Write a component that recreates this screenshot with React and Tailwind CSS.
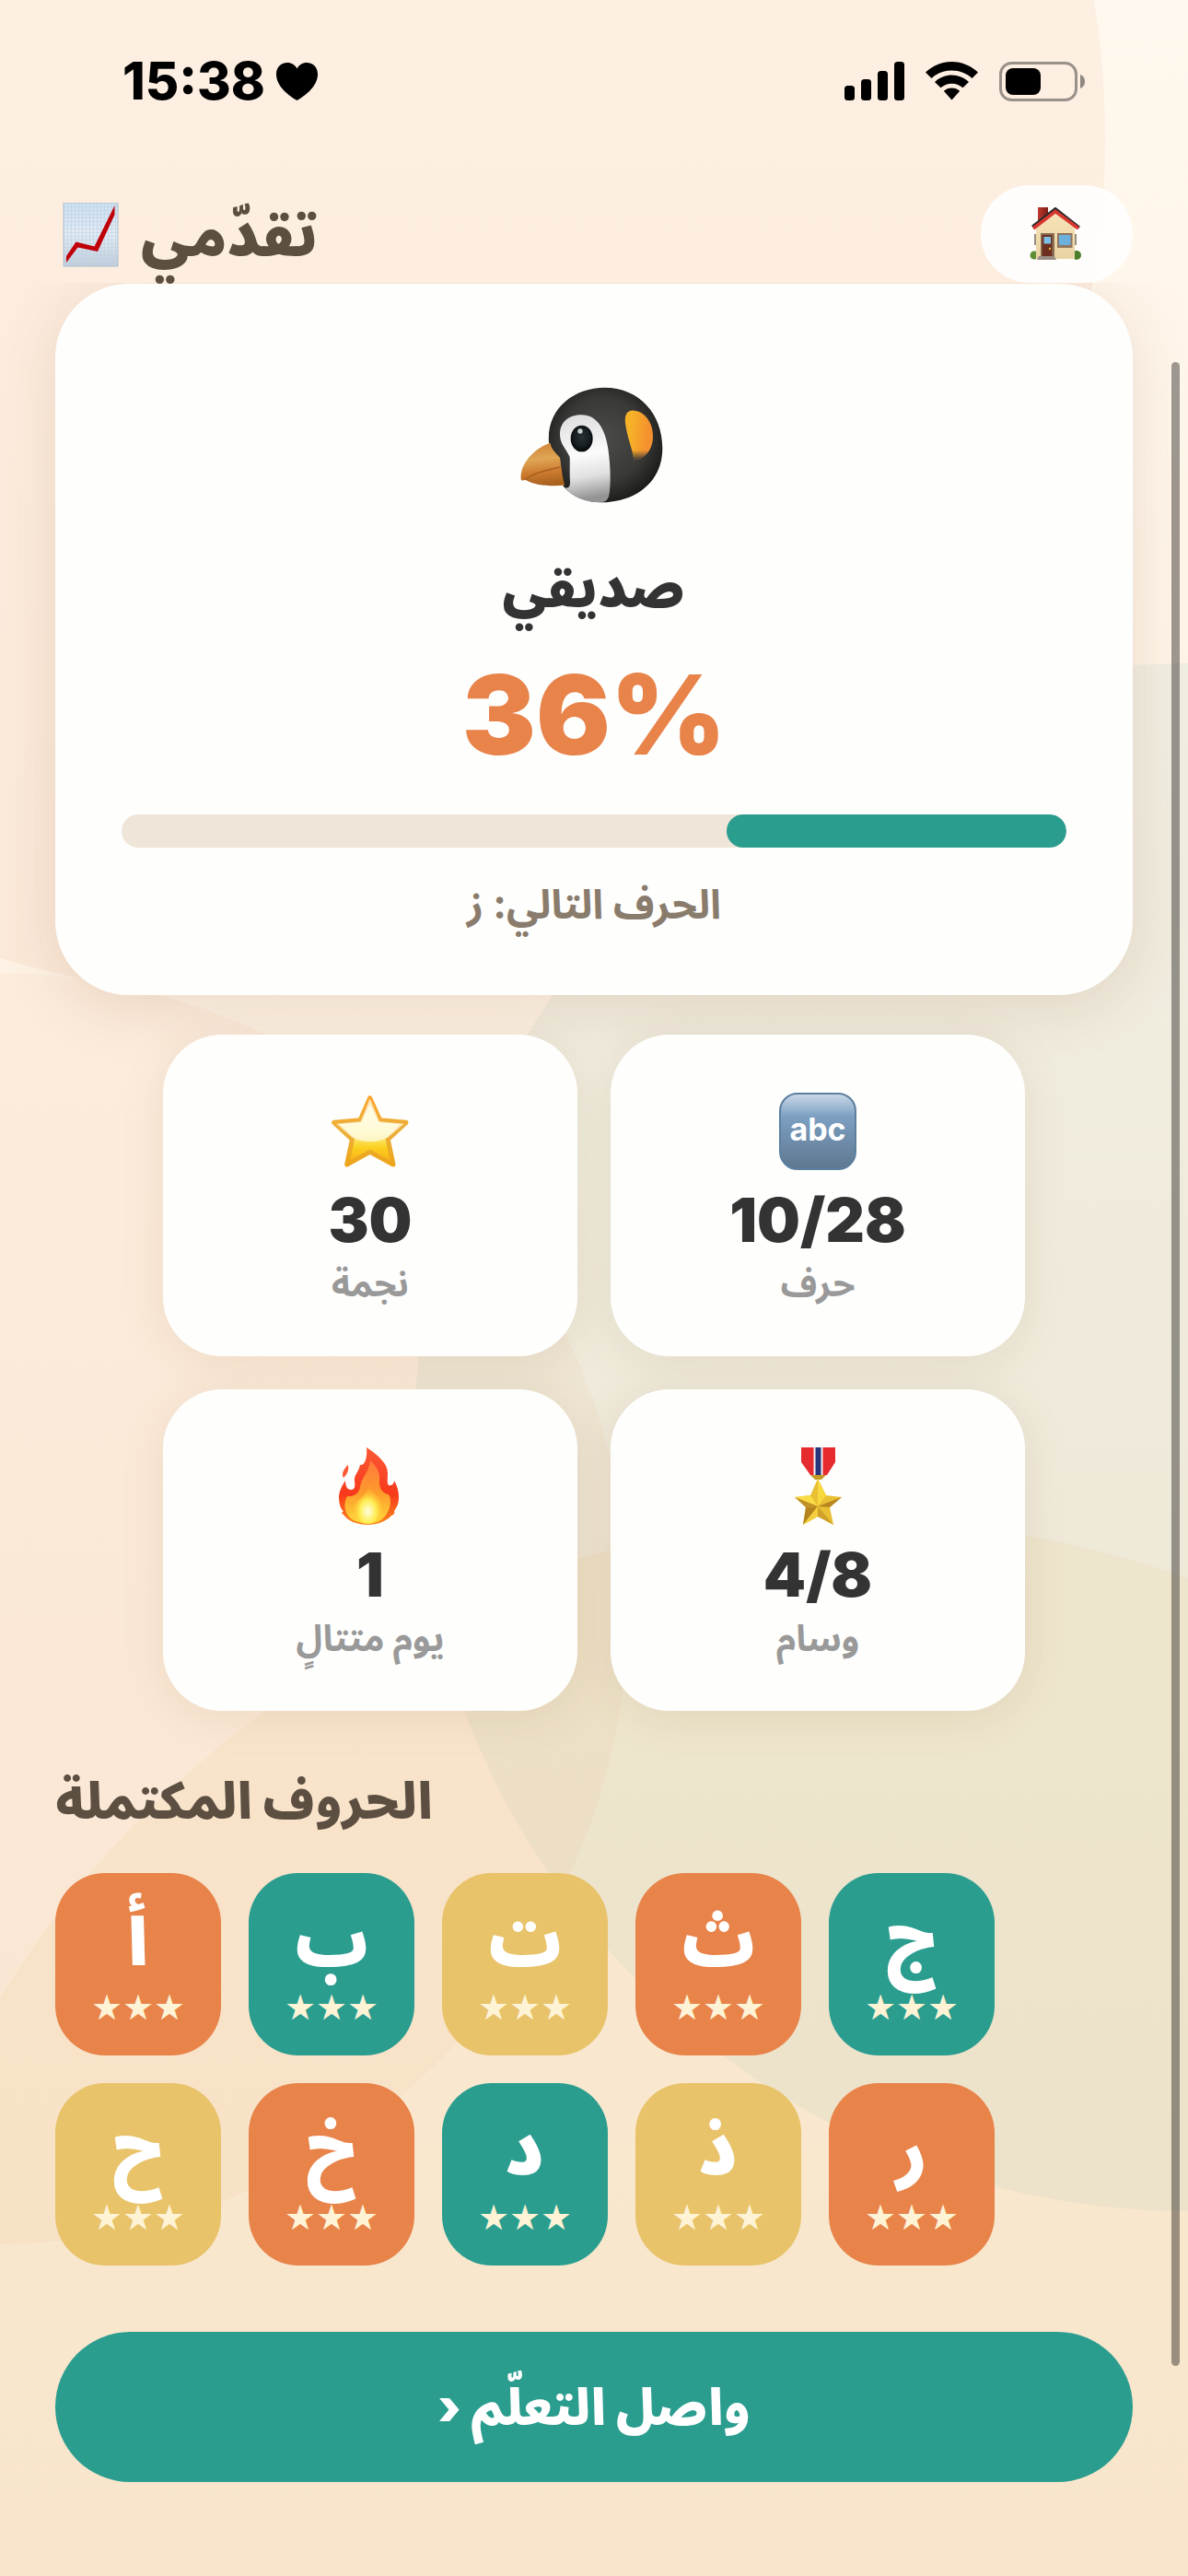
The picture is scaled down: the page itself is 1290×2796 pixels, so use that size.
const stats = [
  { icon: AbcIcon, value: '10/28', label: 'حرف' },
  { icon: StarIcon, value: '30', label: 'نجمة' },
  { icon: MedalIcon, value: '4/8', label: 'وسام' },
  { icon: FireIcon, value: '1', label: 'يوم متتالٍ' },
]

const letters = [
  { char: 'أ', color: 'bg-[#e8834a]' },
  { char: 'ب', color: 'bg-[#2a9d8f]' },
  { char: 'ت', color: 'bg-[#e8c36a]' },
  { char: 'ث', color: 'bg-[#e8834a]' },
  { char: 'ج', color: 'bg-[#2a9d8f]' },
  { char: 'ح', color: 'bg-[#e8c36a]' },
  { char: 'خ', color: 'bg-[#e8834a]' },
  { char: 'د', color: 'bg-[#2a9d8f]' },
  { char: 'ذ', color: 'bg-[#e8c36a]' },
  { char: 'ر', color: 'bg-[#e8834a]' },
]

const progress = 36

function ChartIcon() {
  return (
    <svg viewBox="-9 0 77 70" className="h-[70px] w-[77px]" aria-hidden="true">
      <defs>
        <linearGradient id="chart-bg" x1="0" y1="0" x2="0" y2="1">
          <stop offset="0" stopColor="#cfe0ee" />
          <stop offset="0.5" stopColor="#e6ebf1" />
          <stop offset="1" stopColor="#c3ccd6" />
        </linearGradient>
        <pattern id="chart-grid" width="4" height="4" patternUnits="userSpaceOnUse">
          <path d="M0 0H4M0 0V4" stroke="#b4d2ec" strokeWidth="1.2" fill="none" />
        </pattern>
      </defs>
      <rect width="59" height="69" fill="url(#chart-bg)" />
      <rect width="59" height="69" fill="url(#chart-grid)" stroke="#aebfce" strokeWidth="1" />
      <path d="M3 65V58L13.500 42.500L33.500 47.500L55.500 3V13L37 53L15.500 48.500Z" fill="#c00008" />
    </svg>
  )
}

function HouseIcon() {
  return (
    <svg viewBox="0 0 60 58" className="h-[58px] w-[60px]" aria-hidden="true">
      <defs>
        <linearGradient id="house-wall" x1="0" y1="0" x2="0" y2="1">
          <stop offset="0" stopColor="#f8e3b8" />
          <stop offset="1" stopColor="#e9d3a4" />
        </linearGradient>
        <linearGradient id="house-chimney" x1="0" y1="0" x2="1" y2="0">
          <stop offset="0" stopColor="#c0392f" />
          <stop offset="1" stopColor="#7d1d18" />
        </linearGradient>
      </defs>
      <rect x="9" y="0" width="11" height="16" fill="url(#house-chimney)" />
      <circle cx="5" cy="52" r="4.500" fill="#5f8f35" />
      <circle cx="51" cy="52" r="5" fill="#4d7f2b" />
      <path d="M7 22L28 5L49 22V56H7Z" fill="url(#house-wall)" />
      <path d="M6 29V41M50 29V41" stroke="#7a6756" strokeWidth="1.500" />
      <path d="M3 21L28 1.500L54 22" fill="none" stroke="#2a2a2c" strokeWidth="3" />
      <path d="M4 23L28 4.500L53 23" fill="none" stroke="#d8372f" strokeWidth="3.600" />
      <rect x="12" y="28" width="15" height="26" fill="#8d7156" />
      <rect x="13.500" y="30" width="11" height="23" fill="#6d3020" />
      <rect x="15.500" y="32" width="7.500" height="7.500" fill="#7cc0e6" />
      <circle cx="22" cy="45" r="1.200" fill="#f0b43c" />
      <rect x="30" y="28" width="16.500" height="16" fill="#8f765d" />
      <rect x="32" y="30" width="12.500" height="11" fill="#6cb0de" />
      <path d="M10 53H27L29 57H8Z" fill="#9a8d84" />
    </svg>
  )
}

function PenguinIcon() {
  return (
    <svg viewBox="315 42 480 480" className="size-40" aria-hidden="true">
      <defs>
        <radialGradient id="pen-head" cx="0.48" cy="0.45" r="0.56">
          <stop offset="0" stopColor="#4b4b4a" />
          <stop offset="0.65" stopColor="#393938" />
          <stop offset="1" stopColor="#1b1b1a" />
        </radialGradient>
        <linearGradient id="pen-face" x1="0" y1="0" x2="0.1" y2="1">
          <stop offset="0" stopColor="#dcdcdd" />
          <stop offset="0.5" stopColor="#fbfbfb" />
          <stop offset="0.75" stopColor="#e0e0e0" />
          <stop offset="1" stopColor="#949494" />
        </linearGradient>
        <linearGradient id="pen-beak" x1="0.2" y1="0" x2="0.3" y2="1">
          <stop offset="0" stopColor="#d08236" />
          <stop offset="0.4" stopColor="#dfa655" />
          <stop offset="0.7" stopColor="#cd7c30" />
          <stop offset="1" stopColor="#a9611e" />
        </linearGradient>
        <linearGradient id="pen-ear" x1="0" y1="0.3" x2="1" y2="0.5">
          <stop offset="0.2" stopColor="#f6b227" />
          <stop offset="0.8" stopColor="#f5922f" />
        </linearGradient>
        <linearGradient id="pen-ear-fade" x1="0" y1="0" x2="0" y2="1">
          <stop offset="0.8" stopColor="#3a3a39" stopOpacity="0" />
          <stop offset="1" stopColor="#3a3a39" />
        </linearGradient>
        <radialGradient id="pen-eye" cx="0.5" cy="0.45" r="0.55">
          <stop offset="0" stopColor="#2a3033" />
          <stop offset="0.6" stopColor="#182023" />
          <stop offset="1" stopColor="#050607" />
        </radialGradient>
      </defs>
      <path
        d="M408 270C400 160 490 92 590 92C700 92 778 175 778 290C778 400 690 465 580 466C530 466 485 448 456 415C446 380 446 345 440 322C425 305 412 292 408 270Z"
        fill="url(#pen-head)"
      />
      <path
        d="M444 245C444 202 475 181 515 181C563 181 590 225 600 285C608 335 610 390 606 430C603 457 596 465 575 466C530 466 485 450 458 417C472 423 478 412 477 398C475 370 477 345 476 318C464 290 444 275 444 245Z"
        fill="url(#pen-face)"
      />
      <path
        d="M413 272C370 285 312 335 317 390C319 398 325 394 331 392C360 410 410 414 460 410C450 380 448 340 444 320C430 304 415 292 413 272Z"
        fill="url(#pen-beak)"
      />
      <path d="M331 392C365 365 405 362 446 350" fill="none" stroke="#a35a1b" strokeWidth="4" />
      <path
        d="M685 167C660 165 653 185 658 215C665 260 680 290 685 328C722 325 747 295 747 250C747 200 715 168 685 167Z"
        fill="url(#pen-ear)"
      />
      <path
        d="M685 167C660 165 653 185 658 215C665 260 680 290 685 328C722 325 747 295 747 250C747 200 715 168 685 167Z"
        fill="url(#pen-ear-fade)"
      />
      <ellipse cx="515" cy="258" rx="36" ry="43" fill="url(#pen-eye)" />
      <circle cx="510" cy="234" r="8" fill="#c9cccd" />
    </svg>
  )
}

function AbcIcon() {
  return (
    <div className="flex size-[84px] items-center justify-center rounded-[20px] border-2 border-[#5c7f9f] bg-linear-to-b from-[#c9d8e6] via-[#7c9fc2] via-30% to-[#5f7890] pb-1 font-['Inter',sans-serif] text-[34px] leading-none font-bold text-white">
      abc
    </div>
  )
}

function StarIcon() {
  return (
    <svg viewBox="594 198 252 252" className="size-[84px]" aria-hidden="true">
      <defs>
        <linearGradient id="star-fill" x1="0" y1="0" x2="0" y2="1">
          <stop offset="0" stopColor="#fffbe0" />
          <stop offset="0.5" stopColor="#fdf3a0" />
          <stop offset="0.75" stopColor="#fbd01f" />
          <stop offset="1" stopColor="#f8a818" />
        </linearGradient>
        <linearGradient id="star-edge" x1="0" y1="0" x2="0" y2="1">
          <stop offset="0" stopColor="#fba62c" />
          <stop offset="0.5" stopColor="#ecb03a" />
          <stop offset="1" stopColor="#eda51a" />
        </linearGradient>
      </defs>
      <path
        d="M719 215L752 287L837 295L778 350L795 432L719 391L644 432L661 350L602 295L687 287Z"
        fill="url(#star-fill)"
        stroke="url(#star-edge)"
        strokeWidth="15"
        strokeLinejoin="round"
      />
      <path
        d="M719 217L750 292L830 299L777 344C740 362 700 362 662 344L610 299L689 292Z"
        fill="#fffdee"
        opacity="0.7"
      />
    </svg>
  )
}

function FireIcon() {
  return (
    <svg viewBox="0 0 84 84" className="size-[84px]" aria-hidden="true">
      <defs>
        <linearGradient id="fire-outer" x1="0" y1="0" x2="0" y2="1">
          <stop offset="0" stopColor="#fb5a36" />
          <stop offset="0.6" stopColor="#f8391c" />
          <stop offset="1" stopColor="#fb8a1c" />
        </linearGradient>
        <linearGradient id="fire-mid" x1="0" y1="0" x2="0" y2="1">
          <stop offset="0" stopColor="#ff7a3d" />
          <stop offset="0.5" stopColor="#fd9a2b" />
          <stop offset="1" stopColor="#ffd83a" />
        </linearGradient>
        <radialGradient id="fire-core" cx="0.5" cy="0.7" r="0.55">
          <stop offset="0" stopColor="#fffde0" />
          <stop offset="0.5" stopColor="#ffee55" />
          <stop offset="1" stopColor="#fdb827" stopOpacity="0.2" />
        </radialGradient>
      </defs>
      <path
        d="M38 0C50 8 61 17 61 28C61 34 60 39 62 41C66 42 68 39 68 36C71 41 73 47 73 54C73 61 71 65 68 69C69 73 67 73 65 74C60 80 50 84 39 84C28 84 18 80 13 73C10 71 11 70 13 70C9 65 8 60 8 53C9 45 12 41 15 36C15 42 17 46 21 46C25 46 26 43 25 37C24 30 29 28 31 19C36 20 39 12 38 0Z"
        fill="url(#fire-outer)"
      />
      <path d="M18 19C19 25 17 29 13 33C10 29 14 22 18 19Z" fill="#fb5a36" />
      <path
        d="M42 14C50 22 53 28 52 36C51 45 56 50 62 51C67 60 62 74 52 80C44 84 30 83 22 78C13 71 13 60 17 53C24 54 30 50 31 43C32 33 41 27 42 14Z"
        fill="url(#fire-mid)"
      />
      <path
        d="M41 38C42 48 50 52 55 60C58 70 50 83 40 83C28 83 20 72 25 62C31 55 41 50 41 38Z"
        fill="url(#fire-core)"
      />
    </svg>
  )
}

function MedalIcon() {
  return (
    <svg viewBox="0 0 84 84" className="size-[84px]" aria-hidden="true">
      <path d="M24 0H61V16L52 30H34L24 16Z" fill="#e52b2e" />
      <path d="M37.500 0H47.500V30H37.500Z" fill="#f4f1f4" />
      <path d="M39.500 0H45.500V30H39.500Z" fill="#27367a" />
      <path d="M34 30H51L46 35H39Z" fill="#c59a25" />
      <path
        d="M42 34L51 52L68 54L55 65L59 84L42 75L26 84L29 65L17 54L34 52Z"
        fill="#e9bf34"
      />
      <path d="M42 34L51 52L42 64Z" fill="#f7d93f" />
      <path d="M17 54L34 52L42 64Z" fill="#f9dc45" />
      <path d="M68 54L55 65L42 64Z" fill="#b8861f" />
      <path d="M29 65L26 84L42 64Z" fill="#b5841f" />
      <path d="M42 64L59 84L42 75Z" fill="#d0a02a" />
      <path d="M42 64L26 84L42 75Z" fill="#f3cf3e" />
      <path d="M29 65L17 54L42 64Z" fill="#c08f25" />
    </svg>
  )
}

function StatusBar() {
  return (
    <div className="flex items-center justify-between pt-16 pr-28 pl-[133px] text-black">
      <div className="flex h-12 items-center gap-3">
        <span className="text-[56px] leading-[48px] font-extrabold">15:38</span>
        <svg viewBox="0 0 45 41" className="h-[41px] w-[45px]" aria-hidden="true">
          <path d="M22.500 41C14 36 0 26 0 12.500C0 5 5 0 12 0C16.500 0 20.500 2.500 22.500 6.500C24.500 2.500 28.500 0 33 0C40 0 45 5 45 12.500C45 26 31 36 22.500 41Z" />
        </svg>
      </div>
      <div className="flex h-12 items-center gap-[23px]">
        <svg viewBox="0 0 65 42" className="h-[42px] w-[65px]" aria-hidden="true">
          <rect x="0" y="26" width="11" height="16" rx="3.500" />
          <rect x="18" y="19" width="11" height="23" rx="3.500" />
          <rect x="36" y="10" width="11" height="32" rx="3.500" />
          <rect x="54" y="0" width="11" height="42" rx="3.500" />
        </svg>
        <svg viewBox="0 0 57 42" className="h-[42px] w-[57px]" aria-hidden="true">
          <path d="M28.500 0C39.500 0 49.500 4.500 57 11.500L50.500 18C44.500 12.500 37 9.500 28.500 9.500C20 9.500 12.500 12.500 6.500 18L0 11.500C7.500 4.500 17.500 0 28.500 0Z" />
          <path d="M28.500 14.500C35.500 14.500 42 17.300 47 22L40.500 28.300C37.300 25.400 33.200 23.700 28.500 23.700C23.800 23.700 19.700 25.400 16.500 28.300L10 22C15 17.300 21.500 14.500 28.500 14.500Z" />
          <path d="M28.500 28.500C31.800 28.500 34.800 29.700 37.200 31.800L28.500 41.500L19.800 31.800C22.200 29.700 25.200 28.500 28.500 28.500Z" />
        </svg>
        <svg viewBox="0 0 93 43" className="h-[43px] w-[93px]" aria-hidden="true">
          <rect x="1.500" y="1.500" width="82" height="40" rx="12" fill="none" stroke="#99908a" strokeWidth="3" />
          <rect x="7" y="7" width="38" height="29" rx="8" />
          <path d="M88 14C91.500 15.500 93 18 93 21.500C93 25 91.500 27.500 88 29Z" fill="#8f8781" />
        </svg>
      </div>
    </div>
  )
}

function StatCard({ icon: Icon, value, label }) {
  return (
    <div className="flex flex-col items-center rounded-[64px] bg-[#fefefd] pt-[63px] pb-[46px] shadow-[0_6px_48px_rgba(140,105,60,0.12)]">
      <Icon />
      <p dir="ltr" className="mt-[18px] text-[66px] leading-[72px] font-black text-[#333]">
        {value}
      </p>
      <p className="text-[39px] leading-[66px] font-bold text-[#999]">{label}</p>
    </div>
  )
}

function LetterTile({ char, color }) {
  return (
    <li className={`flex h-[198px] w-[180px] flex-col items-center rounded-[54px] pt-[22px] text-white ${color}`}>
      <span className="text-[78px] leading-[100px] font-black">{char}</span>
      <span className="font-['DejaVu_Sans',sans-serif] text-[38px] leading-[48px] text-[#fff3d6]" aria-label="3 نجوم">
        ★★★
      </span>
    </li>
  )
}

export default function App() {
  return (
    <div className="relative isolate flex min-h-screen flex-col overflow-hidden bg-linear-to-b from-[#fff8ee] to-[#fae9d6] font-['Inter','Noto_Sans_Arabic','DejaVu_Sans_Condensed',sans-serif]">
      <div className="pointer-events-none absolute inset-0 -z-10 overflow-hidden" aria-hidden="true">
        <div className="absolute -top-[780px] -left-[660px] size-[1860px] rounded-full bg-[#e8834a]/7" />
        <div className="absolute top-[720px] -right-[840px] size-[1680px] rounded-full bg-[#2a9d8f]/6" />
        <div className="absolute top-[1056px] -left-[698px] size-[1380px] rounded-full bg-[#e8834a]/5" />
        <div className="absolute top-[1650px] -left-[160px] size-[2172px] rounded-full bg-[#e8c36a]/10" />
      </div>

      <StatusBar />

      <header className="mt-[89px] flex h-[106px] items-start justify-between px-15">
        <h1 dir="rtl" className="flex items-center gap-4 pt-0.5 text-[64px] leading-[104px] font-black text-[#5c4f42]">
          تقدّمي
          <ChartIcon />
        </h1>
        <button
          type="button"
          aria-label="الرئيسية"
          className="flex h-[106px] w-[165px] items-center justify-center rounded-full bg-white/90"
        >
          <HouseIcon />
        </button>
      </header>

      <main className="flex flex-1 flex-col overflow-hidden px-15 pt-px pb-[102px]">
        <section
          dir="rtl"
          className="flex flex-col items-center rounded-[80px] bg-[#fefefd] px-18 pt-24 pb-16 shadow-[0_12px_66px_rgba(140,90,50,0.16)]"
        >
          <PenguinIcon />
          <h2 className="mt-8 text-[58px] leading-[84px] font-black text-[#333]">صديقي</h2>
          <p dir="ltr" className="mt-6 text-[120px] leading-[144px] font-black text-[#e8834a]">
            {progress}%
          </p>
          <div
            role="progressbar"
            aria-label="التقدّم"
            aria-valuenow={progress}
            aria-valuemin={0}
            aria-valuemax={100}
            className="mt-9 h-9 w-full overflow-hidden rounded-full bg-[#efe6d9]"
          >
            <div className="h-full rounded-full bg-[#2a9d8f]" style={{ width: `${progress}%` }} />
          </div>
          <p className="mt-[26px] text-[44px] leading-[70px] font-bold text-[#8a7c6c]">الحرف التالي: ز</p>
        </section>

        <section dir="rtl" className="mx-auto mt-[43px] grid w-4/5 grid-cols-2 gap-9">
          {stats.map((stat) => (
            <StatCard key={stat.label} {...stat} />
          ))}
        </section>

        <h2 className="mt-14 text-[54px] leading-[84px] font-black text-[#5c4f42]">الحروف المكتملة</h2>
        <ul className="mt-9 flex flex-wrap gap-[30px]">
          {letters.map((letter) => (
            <LetterTile key={letter.char} {...letter} />
          ))}
        </ul>

        <button
          type="button"
          dir="rtl"
          className="mt-18 h-[163px] w-full rounded-full bg-[#2a9d8f] text-[54px] leading-[84px] font-black text-white"
        >
          واصل التعلّم ‹
        </button>
      </main>

      <div className="absolute top-[393px] right-[9px] bottom-[228px] w-[9px] rounded-full bg-black/38" aria-hidden="true" />
    </div>
  )
}
